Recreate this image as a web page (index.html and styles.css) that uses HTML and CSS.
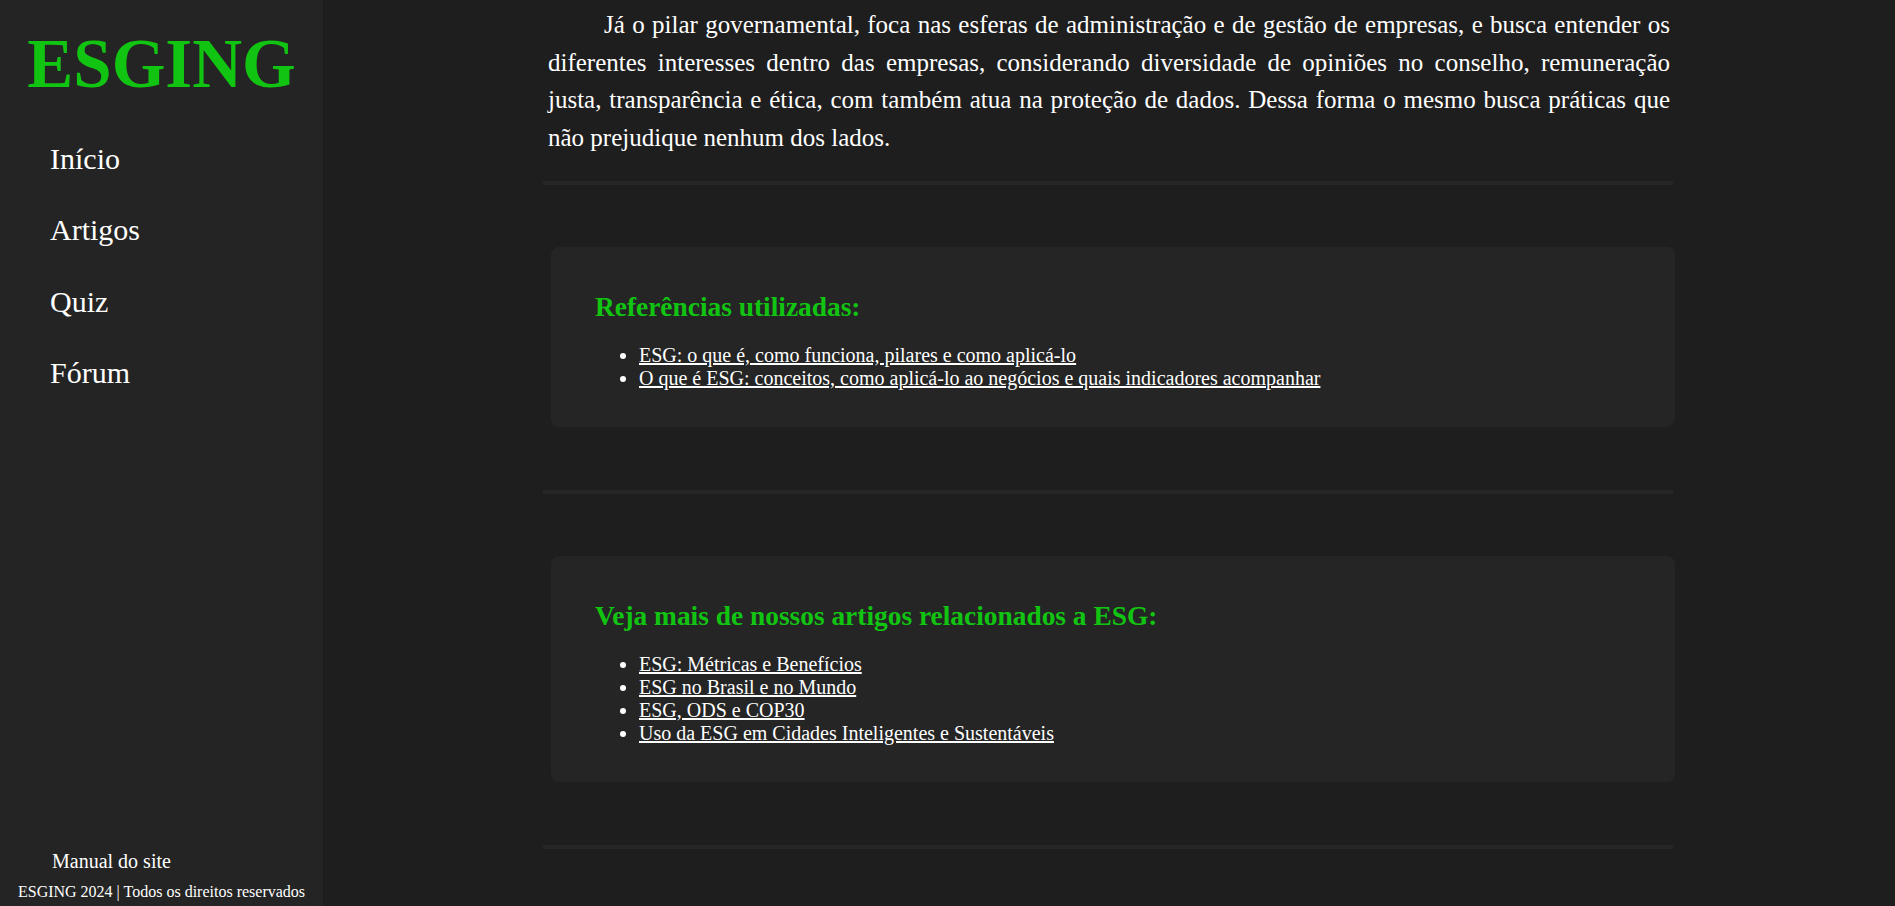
FILE: index.html
```html
<!DOCTYPE html>
<html lang="pt-BR">
<head>
<meta charset="utf-8">
<title>ESGING</title>
<link rel="stylesheet" href="styles.css">
</head>
<body>
<div class="layout">
  <aside class="sidebar">
    <h1 class="logo">ESGING</h1>
    <ul class="nav">
      <li><a href="#">Início</a></li>
      <li><a href="#">Artigos</a></li>
      <li><a href="#">Quiz</a></li>
      <li><a href="#">Fórum</a></li>
    </ul>
    <div class="side-footer">
      <a class="manual" href="#">Manual do site</a>
      <p class="copy">ESGING 2024 | Todos os direitos reservados</p>
    </div>
  </aside>
  <main class="main">
    <div class="content">
      <p class="intro">Já o pilar governamental, foca nas esferas de administração e de gestão de empresas, e busca entender os diferentes interesses dentro das empresas, considerando diversidade de opiniões no conselho, remuneração justa, transparência e ética, com também atua na proteção de dados. Dessa forma o mesmo busca práticas que não prejudique nenhum dos lados.</p>
      <hr class="divider">
      <section class="section">
        <div class="card">
          <h2>Referências utilizadas:</h2>
          <ul>
            <li><a href="#">ESG: o que é, como funciona, pilares e como aplicá-lo</a></li>
            <li><a href="#">O que é ESG: conceitos, como aplicá-lo ao negócios e quais indicadores acompanhar</a></li>
          </ul>
        </div>
      </section>
      <hr class="divider">
      <section class="section">
        <div class="card">
          <h2>Veja mais de nossos artigos relacionados a ESG:</h2>
          <ul>
            <li><a href="#">ESG: Métricas e Benefícios</a></li>
            <li><a href="#">ESG no Brasil e no Mundo</a></li>
            <li><a href="#">ESG, ODS e COP30</a></li>
            <li><a href="#">Uso da ESG em Cidades Inteligentes e Sustentáveis</a></li>
          </ul>
        </div>
      </section>
      <hr class="divider">
    </div>
  </main>
</div>
</body>
</html>
```
FILE: styles.css
```css
html, body {
  margin: 0;
  padding: 0;
}
body {
  background: #1e1e1e;
  color: #ffffff;
  font-family: "Liberation Serif", "Times New Roman", serif;
  overflow: hidden;
}
.layout {
  display: flex;
  height: 100vh;
}
.sidebar {
  width: 323px;
  flex: none;
  height: 100vh;
  background: #242424;
  display: flex;
  flex-direction: column;
}
.logo {
  margin: 24px 0 0;
  font-size: 69px;
  line-height: 80px;
  font-weight: bold;
  color: #12c412;
  text-align: center;
}
.nav {
  list-style: none;
  margin: 19px 0 0;
  padding: 0 0 0 50px;
}
.nav a {
  display: block;
  font-size: 30px;
  line-height: 71.4px;
  color: #ffffff;
  text-decoration: none;
}
.side-footer {
  margin-top: auto;
  padding-bottom: 5px;
}
.manual {
  display: block;
  padding-left: 52px;
  margin-bottom: 10px;
  font-size: 20px;
  line-height: 23px;
  color: #ffffff;
  text-decoration: none;
}
.copy {
  margin: 0;
  font-size: 16px;
  line-height: 18px;
  text-align: center;
}
.main {
  flex: 1;
  padding-right: 2px;
}
.content {
  width: 1130px;
  margin: 0 auto;
  padding-top: 6px;
}
.intro {
  margin: 0 0 25px;
  padding: 0 3px 0 5px;
  font-size: 25px;
  line-height: 37.5px;
  text-align: justify;
  text-indent: 56px;
}
.divider {
  display: block;
  height: 4px;
  margin: 0;
  border: 0;
  background: #262626;
}
.section {
  padding: 62px 0 63px;
}
.card {
  margin: 0 -2px 0 8px;
  padding: 44px 44px 37px;
  background: #252525;
  border-radius: 8px;
}
.card h2 {
  margin: 0 0 21px;
  font-size: 27.4px;
  line-height: 32px;
  font-weight: bold;
  color: #12c412;
}
.card ul {
  margin: 0;
  padding-left: 44px;
  font-size: 20px;
  line-height: 23px;
}
.card a {
  color: #ffffff;
}
```
